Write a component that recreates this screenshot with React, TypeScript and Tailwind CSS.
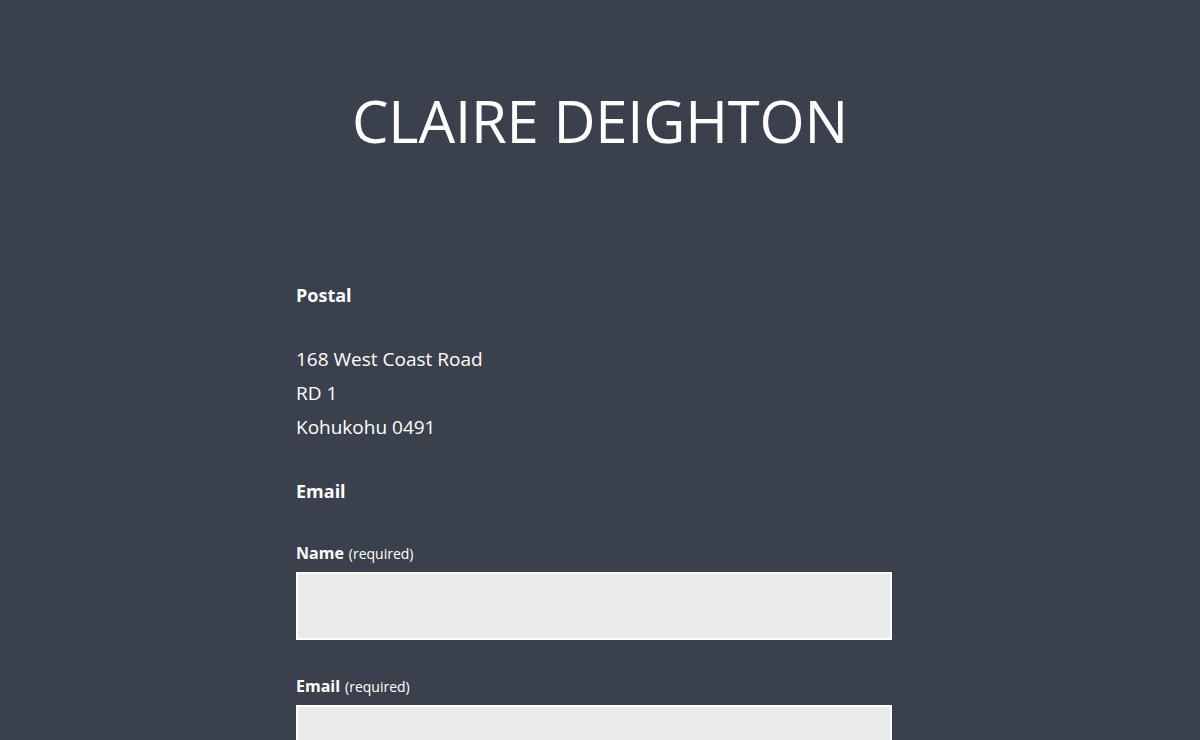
export default function App() {
  return (
    <div
      className="min-h-screen bg-[#3b414c] text-white"
      style={{ fontFamily: '"Open Sans", "Noto Sans", sans-serif' }}
    >
      <header className="pt-[83px] pb-[119px] text-center">
        <h1 className="text-[58px] font-normal leading-[76px] tracking-[-0.2px]">CLAIRE DEIGHTON</h1>
      </header>

      <main className="mx-auto w-[596px] -translate-x-[6px] text-[19px]">
        <h2 className="font-bold text-[18px] leading-[34px]">Postal</h2>
        <div className="mt-[30px] leading-[34px]">
          <p>168 West Coast Road</p>
          <p>RD 1</p>
          <p>Kohukohu 0491</p>
        </div>

        <h2 className="mt-[30px] font-bold text-[18px] leading-[34px]">Email</h2>

        <form className="mt-[32px]">
          <label className="block leading-[24px]">
            <span className="font-bold text-[16px]">Name</span>{" "}
            <span className="text-[14px]">(required)</span>
          </label>
          <input
            type="text"
            className="mt-[6px] block h-[68px] w-full border-2 border-white bg-[#e9eaec] px-3 text-gray-800 outline-none"
          />

          <label className="mt-[33px] block leading-[24px]">
            <span className="font-bold text-[16px]">Email</span>{" "}
            <span className="text-[14px]">(required)</span>
          </label>
          <input
            type="email"
            className="mt-[6px] block h-[68px] w-full border-2 border-white bg-[#e9eaec] px-3 text-gray-800 outline-none"
          />
        </form>
      </main>
    </div>
  );
}
